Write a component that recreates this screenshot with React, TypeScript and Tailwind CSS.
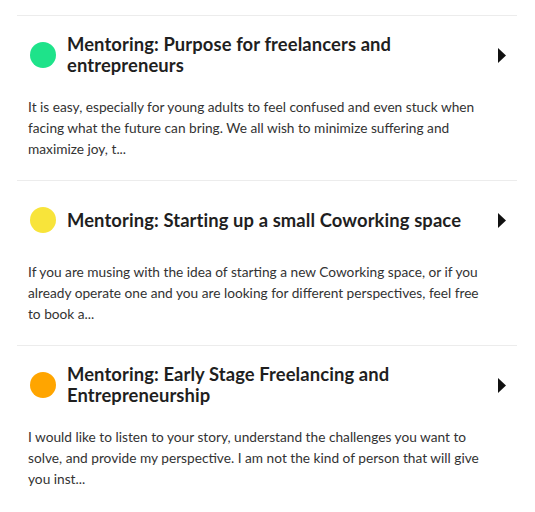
import React from "react";

type Session = {
  color: string;
  title: string;
  body: string;
};

const sessions: Session[] = [
  {
    color: "bg-[#1ee38a]",
    title: "Mentoring: Purpose for freelancers and entrepreneurs",
    body: "It is easy, especially for young adults to feel confused and even stuck when facing what the future can bring. We all wish to minimize suffering and maximize joy, t...",
  },
  {
    color: "bg-[#f8e43a]",
    title: "Mentoring: Starting up a small Coworking space",
    body: "If you are musing with the idea of starting a new Coworking space, or if you already operate one and you are looking for different perspectives, feel free to book a...",
  },
  {
    color: "bg-[#ffa500]",
    title: "Mentoring: Early Stage Freelancing and Entrepreneurship",
    body: "I would like to listen to your story, understand the challenges you want to solve, and provide my perspective. I am not the kind of person that will give you inst...",
  },
];

const SessionCard: React.FC<{ session: Session }> = ({ session }) => {
  return (
    <div className="border-t border-[#ececec] pt-[18px] pb-[21px] pl-[11px] pr-[11px]">
      <div className="flex items-center min-h-[42px]">
        <div className={`w-[26px] h-[26px] rounded-full shrink-0 ml-[2px] ${session.color}`} />
        <div className="flex-1 ml-[11px] pr-8 text-[18.4px] leading-[21px] font-bold text-[#1f1f1f] tracking-[0.1px]">
          {session.title}
        </div>
        <svg width="8" height="15" viewBox="0 0 8 15" className="shrink-0">
          <path d="M0 0 L8 7.5 L0 15 Z" fill="#111" />
        </svg>
      </div>
      <p className="mt-5 pr-[18px] text-[13.7px] leading-[21px] text-[#333]">
        {session.body}
      </p>
    </div>
  );
};

export default function App() {
  return (
    <div
      className="bg-white w-[535px] h-[512px] pt-[15px] pl-[17px] pr-[18px]"
      style={{ fontFamily: "Lato, 'Noto Sans', sans-serif" }}
    >
      {sessions.map((s, i) => (
        <SessionCard key={i} session={s} />
      ))}
    </div>
  );
}
